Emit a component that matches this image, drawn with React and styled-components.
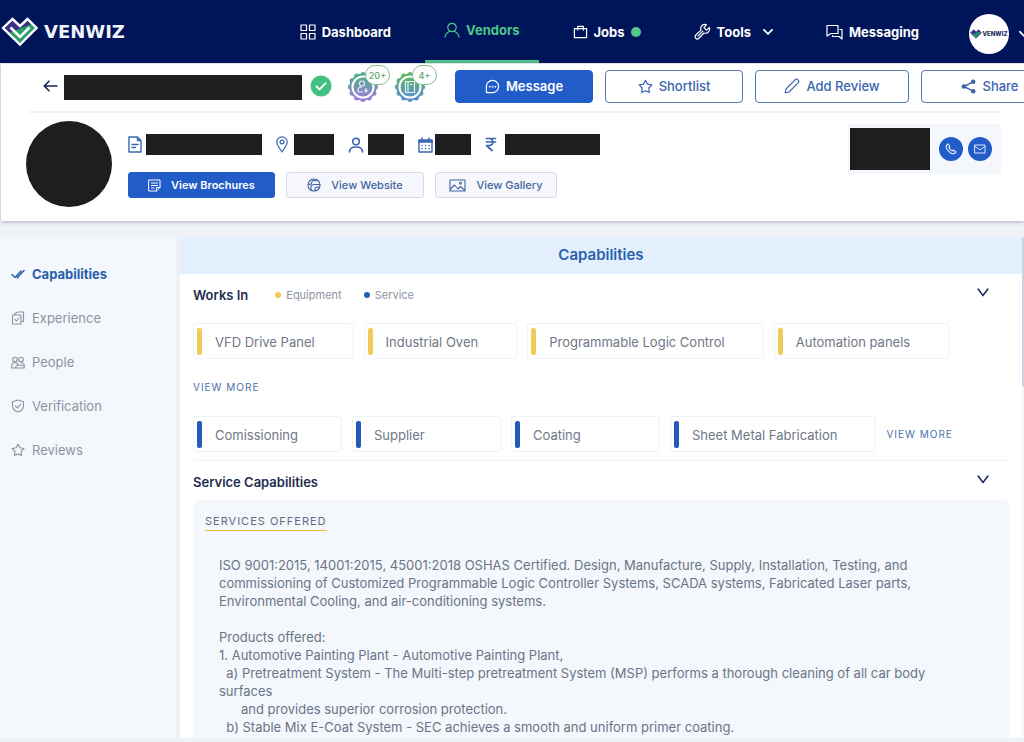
import React from "react";
import styled, { createGlobalStyle } from "styled-components";

const Global = createGlobalStyle`
  * { box-sizing: border-box; }
  body { margin: 0; background: #eef2f6; font-family: Inter, "Open Sans", sans-serif; }
  button, a { font-family: inherit; }
  h1, h2, h3, p, ul { margin: 0; padding: 0; }
`;

const Page = styled.div`
  display: flex;
  flex-direction: column;
  height: 100vh;
  overflow: hidden;
`;

const Svg = styled.svg`
  display: block;
  flex: none;
  width: ${(p) => p.$w || 16}px;
  height: ${(p) => p.$h || p.$w || 16}px;
  fill: none;
  stroke: currentColor;
  stroke-width: ${(p) => p.$stroke || 1.4};
  stroke-linecap: round;
  stroke-linejoin: ${(p) => p.$join || "round"};
`;

/* ---------- icons ---------- */
const IconGrid = () => (
  <Svg viewBox="0 0 16 16" $w={16} $stroke={1.2}>
    <path d="M1 1h5.5v5.5H1zM9.5 1H15v5.5H9.5zM1 9.5h5.5V15H1zM9.5 9.5H15V15H9.5z" />
  </Svg>
);
const IconUser = ({ size = 16, stroke = 1.2 }) => (
  <Svg viewBox="0 0 16 16" $w={size} $stroke={stroke}>
    <circle cx="8" cy="5.5" r="4.2" />
    <path d="M1 15c.6-3 2.500-4.700 4.600-5.500M15 15c-.6-3-2.500-4.700-4.600-5.500" />
  </Svg>
);
const IconPerson = () => (
  <Svg viewBox="0 0 16 16" $stroke={1.6}>
    <circle cx="8" cy="4.500" r="3.300" />
    <path d="M1.500 15c0-3.300 2.600-5 6.500-5s6.500 1.700 6.500 5" />
  </Svg>
);
const IconBag = () => (
  <Svg viewBox="0 0 16 16" $w={15} $stroke={1.3}>
    <path d="M1.500 5h13v9.500h-13zM5 5V2.500h6V5M5 5v1.500M11 5v1.500" />
  </Svg>
);
const IconWrench = () => (
  <Svg viewBox="0 0 24 24" $w={17} $stroke={1.7}>
    <path d="M21.500 6.500 17.500 10 14 6.500l3.500-4C14 1 10 3 9.500 7c-.1 1 0 2 .4 3L2.500 17a3 3 0 0 0 4.500 4.500l7-7.400c4 1.300 8-1.500 8-5.600 0-.7-.2-1.400-.5-2z" />
    <path d="m5.500 18.500 7-7" />
  </Svg>
);
const IconChats = () => (
  <Svg viewBox="0 0 17 16" $w={17} $h={16} $stroke={1.2}>
    <path d="M1 1.500h11v8H5L1 12z" />
    <path d="M14 5.500h2V15l-3-2.500H6.500v-1" />
  </Svg>
);
const IconChevron = ({ w = 10, stroke = 1.8 }) => (
  <Svg viewBox="0 0 10 6" $w={w} $h={w === 12 ? 9 : 6} $stroke={stroke} preserveAspectRatio="none">
    <path d="m1 .8 4 4.200 4-4.200" />
  </Svg>
);
const IconBack = () => (
  <Svg viewBox="0 0 15 12" $w={15} $h={12} $stroke={1.6}>
    <path d="M14 6H1.500M6 1.200 1.200 6 6 10.800" />
  </Svg>
);
const IconVerified = () => (
  <Svg viewBox="0 0 22 22" $w={22} $stroke={1.9}>
    <circle cx="11" cy="11" r="10.500" fill="#42c080" stroke="none" />
    <path d="m6.500 11.300 3 3 6-6" stroke="#fff" />
  </Svg>
);
const IconMessage = () => (
  <Svg viewBox="0 0 16 16" $w={15} $stroke={1.3}>
    <path d="M1.500 14.500V8A6.500 6.500 0 1 1 8 14.500z" />
    <path d="M5 8.200h.1M8 8.200h.1M11 8.200h.1" strokeWidth="1.800" />
  </Svg>
);
const IconStar = ({ size = 15, stroke = 1.3 }) => (
  <Svg viewBox="0 0 16 16" $w={size} $stroke={stroke}>
    <path d="m8 1.300 2.100 4.100 4.700.9-3.300 3.300.6 4.800L8 12.500l-4.100 1.900.6-4.800L1.200 6.300l4.700-.9z" />
  </Svg>
);
const IconPencil = () => (
  <Svg viewBox="0 0 16 16" $w={16} $stroke={1.2}>
    <path d="M1.200 14.800 2 11 11.300 1.700c1.600-1.500 4.500 1 3 2.900L5 14z" />
  </Svg>
);
const IconShare = () => (
  <Svg viewBox="0 0 16 16" $w={15} $stroke={1.500}>
    <path d="M13 3 3 8l10 5" />
    <g fill="currentColor" stroke="none">
      <circle cx="13" cy="3" r="2.400" />
      <circle cx="3" cy="8" r="2.400" />
      <circle cx="13" cy="13" r="2.400" />
    </g>
  </Svg>
);
const IconDoc = () => (
  <Svg viewBox="0 0 14 17" $w={14} $h={17} $stroke={1.400}>
    <path d="M1 1h8.500L13 4.500V16H1zM9.500 1v3.500H13M4 8.500h6M4 11.500h3.500" />
  </Svg>
);
const IconPin = () => (
  <Svg viewBox="0 0 12 17" $w={12} $h={17} $stroke={1.200}>
    <path d="M6 16C3.500 12 .8 9 .8 6a5.200 5.200 0 0 1 10.400 0C11.200 9 8.500 12 6 16z" />
    <circle cx="6" cy="6" r="1.900" />
  </Svg>
);
const IconCalendar = () => (
  <Svg viewBox="0 0 15 16" $w={15} $h={16} $stroke={1.400}>
    <path d="M1 3h13v12H1zM4 1v2M11 1v2" />
    <path d="M1 4.500h13" strokeWidth="2.600" />
    <path d="M4 8.500h.1M7.500 8.500h.1M11 8.500h.1M4 11.500h.1M7.500 11.500h.1M11 11.500h.1" strokeWidth="1.500" />
  </Svg>
);
const IconRupee = () => (
  <Svg viewBox="0 0 12 15" $w={12} $h={15} $stroke={1.700}>
    <path d="M1.500 1.500h9M1.500 5h9M1.500 1.500H4c5 0 5 7 0 7H1.500l5.500 5" />
  </Svg>
);
const IconNote = () => (
  <Svg viewBox="0 0 13 13" $w={13} $stroke={1}>
    <path d="M1 1h11v7.500L8.500 12H1zM8.500 12V8.500H12M3.500 4h6M3.500 6.500h6M3.500 9H6" />
  </Svg>
);
const IconGlobe = () => (
  <Svg viewBox="0 0 14 14" $w={14} $stroke={1.100}>
    <circle cx="7" cy="7" r="6" />
    <path d="M1.300 6c1.500.6 2.700.4 3.200-.8s.1-2.200 1.500-2.700S9 3.500 10.500 2.500M4 12.300V9c0-2 1.500-2.500 3.500-2.500H13M8 12.800V10.500c0-1.300 1.500-1.700 4-1.200" />
  </Svg>
);
const IconImage = () => (
  <Svg viewBox="0 0 17 13" $w={17} $h={13} $stroke={1.100}>
    <path d="M1 1h15v11H1zM1 10.500l4.500-4.500 3.500 4 2.500-2.500 4.500 4" />
    <circle cx="11.500" cy="4.300" r=".9" />
  </Svg>
);
const IconPhone = () => (
  <Svg viewBox="0 0 12 12" $w={12} $stroke={1.200}>
    <path d="M1.500 2.500 3 1l2 2.500-1 1.200C4.700 6.300 5.700 7.300 7.300 8l1.200-1L11 9l-1.500 1.500C6 12 0 6 1.500 2.500z" />
  </Svg>
);
const IconMail = () => (
  <Svg viewBox="0 0 12 10" $w={12} $h={10} $stroke={1}>
    <path d="M1 1h10v8H1zM1.200 2.500 6 6l4.800-3.500" />
  </Svg>
);
const IconChecks = () => (
  <Svg viewBox="0 0 14 10" $w={14} $h={10} $stroke={1.500}>
    <path d="m1 5.500 3 3L10 2M6.500 8.500 13 1.500M7 8.800 6 8" />
  </Svg>
);
const IconCopyCheck = () => (
  <Svg viewBox="0 0 14 14" $w={14} $stroke={1.100}>
    <path d="M1.500 4h8.500v9H1.500zM4 4V2.500L7 1h5.500v9.500H10M4 8.500l1.500 1.500L8 7" />
  </Svg>
);
const IconPeople = () => (
  <Svg viewBox="0 0 14 13" $w={14} $h={13} $stroke={1.100}>
    <circle cx="4" cy="3.500" r="2.300" />
    <circle cx="10" cy="3.500" r="2.300" />
    <path d="M.7 12V9.500C.7 7.500 2 6.800 4 6.800s3 .7 3 2.700M4.500 12c0-2 1.500-3 4.500-3s4.300 1 4.300 3zM10 6.800c2 0 3.300 1 3.300 3V12M.7 12h4" />
  </Svg>
);
const IconShield = () => (
  <Svg viewBox="0 0 14 14" $w={14} $stroke={1.100}>
    <path d="M7 1 12.500 2.800V7c0 3-2.500 5-5.500 6C4 12 1.500 10 1.500 7V2.800zM4.300 6.800l2 2 3.700-4" />
  </Svg>
);

const LogoMark = ({ width = 37, height = 30, outline = "#fff" }) => (
  <Svg viewBox="0 0 37 30" $w={width} $h={height} $stroke={2.400} $join="miter">
    <path d="M2 11 11.500 2l7.500 7 7.500-7L35.500 11 19 27.500z" fill="#3b2f86" stroke="none" />
    <path d="m8 16 11 11.500L35 11 30.500 7z" fill="#2a9f68" stroke="none" />
    <path d="m9.500 10.500 9.500 9.500 9.500-9.500" stroke={outline} strokeWidth="2.600" strokeLinecap="butt" />
    <path d="M2 11 11.500 2l7.500 7 7.500-7L35.500 11 19 27.500z" stroke={outline} />
  </Svg>
);

/* ---------- top navigation ---------- */
const TopBar = styled.header`
  display: flex;
  flex: none;
  align-items: stretch;
  height: 63px;
  padding-left: 1px;
  background: #001459;
  color: #fff;
  overflow: hidden;
`;
const Brand = styled.a`
  display: flex;
  flex: none;
  align-items: center;
  gap: 6px;
  color: #f2f4fb;
  text-decoration: none;
`;
const BrandName = styled.span`
  font: 700 18px/24px "DejaVu Sans", sans-serif;
`;
const Nav = styled.nav`
  display: flex;
  flex: none;
  gap: 15px;
  margin-left: auto;
`;
const NavLink = styled.a`
  display: flex;
  align-items: center;
  gap: 6px;
  padding: ${(p) => (p.$active ? 0 : 3)}px 19px 0;
  border-bottom: 3px solid ${(p) => (p.$active ? "#4fbf8b" : "transparent")};
  color: ${(p) => (p.$active ? "#4cc78a" : "#fff")};
  font-size: 13px;
  font-weight: 700;
  text-decoration: none;
  white-space: nowrap;
`;
const Dot = styled.span`
  flex: none;
  width: ${(p) => p.$size}px;
  height: ${(p) => p.$size}px;
  border-radius: 50%;
  background: ${(p) => p.$color};
`;
const NavCaret = styled.span`
  margin-left: 6px;
`;
const Account = styled.button`
  display: flex;
  flex: none;
  align-items: center;
  gap: 10px;
  width: 55px;
  margin-left: 31px;
  padding: 4px 0 0;
  border: 0;
  background: none;
  color: #fff;
`;
const AccountPicture = styled.span`
  display: flex;
  flex: none;
  align-items: center;
  justify-content: center;
  width: 40px;
  height: 40px;
  border-radius: 50%;
  background: #fff;
  color: #1c2a63;
  font-size: 6px;
  font-weight: 800;
`;

/* ---------- vendor header ---------- */
const VendorCard = styled.section`
  flex: none;
  margin: 1px 0 0 1px;
  padding: 0 0 14px 27px;
  background: #fff;
  box-shadow: 0 1px 4px rgba(40, 50, 90, 0.35);
  overflow: hidden;
`;
const TitleRow = styled.div`
  display: flex;
  align-items: center;
  height: 49px;
  padding: 0 0 3px 15px;
  border-bottom: 2px solid #f2f2f4;
  margin-right: 23px;
`;
const IconButton = styled.button`
  display: flex;
  flex: none;
  padding: 0;
  border: 0;
  background: none;
  color: #17235c;
`;
const Redacted = styled.span`
  display: block;
  flex: none;
  width: ${(p) => p.$w}px;
  height: ${(p) => p.$h}px;
  background: #1e1e1e;
`;
const TitleName = styled.h1`
  flex: none;
  margin: 3px 8px 0 6px;
`;
const Badges = styled.div`
  display: flex;
  flex: none;
  gap: 3px;
  margin: 0 17px 6px 15px;
`;
const BadgeSvg = styled.svg`
  display: block;
  width: 44px;
  height: 40px;
`;
const Actions = styled.div`
  display: flex;
  flex: none;
  gap: 12px;
`;
const ActionButton = styled.button`
  display: flex;
  flex: none;
  align-items: center;
  justify-content: center;
  gap: 6px;
  width: ${(p) => (p.$wide ? 154 : 138)}px;
  height: 33px;
  padding: 0;
  border: 1px solid ${(p) => (p.$primary ? "#215cc9" : "#5478a8")};
  border-radius: 4px;
  background: ${(p) => (p.$primary ? "#215cc9" : "#fff")};
  color: ${(p) => (p.$primary ? "#fff" : "#3865ae")};
  font-size: 13px;
  font-weight: ${(p) => (p.$primary ? 600 : 500)};
`;
const Profile = styled.div`
  display: flex;
  align-items: flex-start;
  margin-right: 23px;
`;
const VendorPicture = styled.div`
  flex: none;
  width: 86px;
  height: 86px;
  margin: 8px 16px 0 -2px;
  border-radius: 50%;
  background: #1e1e1e;
`;
const ProfileBody = styled.div`
  flex: 1;
  padding-top: 21px;
`;
const Facts = styled.div`
  display: flex;
  gap: 14px;
`;
const Fact = styled.div`
  display: flex;
  align-items: center;
  gap: ${(p) => p.$gap}px;
  color: #3765b2;
`;
const Links = styled.div`
  display: flex;
  gap: 11px;
  margin-top: 17px;
`;
const LinkButton = styled.button`
  display: flex;
  align-items: center;
  justify-content: center;
  gap: 10px;
  width: ${(p) => p.$w}px;
  height: 26px;
  padding: 0;
  border: 1px solid ${(p) => (p.$primary ? "#215cc9" : "#d5dbe8")};
  border-radius: 3px;
  background: ${(p) => (p.$primary ? "#215cc9" : "#f5f7fd")};
  color: ${(p) => (p.$primary ? "#fff" : "#41659f")};
  font-size: 11px;
  font-weight: ${(p) => (p.$primary ? 600 : 500)};
`;
const Contact = styled.div`
  display: flex;
  align-items: center;
  gap: 5px;
  height: 50px;
  margin-top: 11px;
  padding: 0 9px 0 2px;
  background: #f4f7fc;
`;
const ContactName = styled.div`
  margin-right: 4px;
`;
const RoundButton = styled.button`
  display: flex;
  align-items: center;
  justify-content: center;
  width: 24px;
  height: 24px;
  padding: 0;
  border: 0;
  border-radius: 50%;
  background: #215cc9;
  color: #dfe9fb;
`;

/* ---------- body ---------- */
const Body = styled.div`
  display: flex;
  flex: 1;
  min-height: 0;
  margin: 16px 0 4px;
`;
const Sidebar = styled.nav`
  flex: none;
  width: 176px;
  margin-right: 4px;
  padding: 15px 0 0 11px;
  background: #f4f8fc;
`;
const SideLink = styled.a`
  display: flex;
  align-items: center;
  gap: 7px;
  height: 44px;
  color: ${(p) => (p.$active ? "#2a60ab" : "#8b93a3")};
  font-size: 13px;
  font-weight: ${(p) => (p.$active ? 700 : 400)};
  text-decoration: none;
`;
const Panel = styled.main`
  flex: 1;
  min-width: 0;
  background: #fff;
  overflow: hidden;
`;
const PanelTitle = styled.h2`
  height: 37px;
  background: #e3effd;
  color: #2a61ab;
  font-size: 15px;
  font-weight: 600;
  line-height: 36px;
  text-align: center;
`;
const Track = styled.div`
  flex: none;
  width: 2px;
  background: #f4f6fa;
`;
const Thumb = styled.div`
  height: 150px;
  border-radius: 1px;
  background: #cdd3e2;
`;
const Section = styled.section`
  margin: 0 13px;
`;
const SectionHead = styled.div`
  display: flex;
  align-items: center;
  padding: ${(p) => (p.$first ? "10px 20px 17px 0" : "10px 20px 7px 0")};
  line-height: 22px;
`;
const SectionTitle = styled.h3`
  color: #1e2b50;
  font-size: 13px;
  font-weight: 600;
`;
const Legend = styled.span`
  display: flex;
  align-items: center;
  gap: 5px;
  margin-left: ${(p) => p.$ml}px;
  color: #8f95a3;
  font-size: 11px;
`;
const Toggle = styled.span`
  margin: 0 0 5px auto;
`;
const Chips = styled.div`
  display: flex;
  align-items: center;
  gap: 10px;
`;
const Chip = styled.div`
  display: flex;
  flex: none;
  align-items: center;
  min-width: 149px;
  height: 36px;
  padding: 1px 38px 0 4px;
  border: 1px solid #f1f2f5;
  border-radius: 3px;
  color: #6f7786;
  font-size: 13px;
  white-space: nowrap;
  &::before {
    content: "";
    width: 5px;
    height: 27px;
    margin: 0 13px 1px -1px;
    border-radius: 2px;
    background: ${(p) => p.$color};
  }
`;
const MoreButton = styled.button`
  flex: none;
  padding: 0;
  border: 0;
  background: none;
  color: #4a72a8;
  font-size: 10px;
  line-height: 16px;
  letter-spacing: 1px;
`;
const MoreRow = styled.div`
  display: flex;
  padding: 20px 0 21px;
`;
const Divider = styled.hr`
  height: 1px;
  margin: 8px 0 0;
  border: 0;
  background: #f3f3f6;
`;
const Offered = styled.div`
  padding: 12px;
  border-radius: 5px;
  background: #f4f7fc;
`;
const OfferedTitle = styled.h4`
  width: fit-content;
  margin: 0;
  border-bottom: 1px solid #eebb3c;
  color: #5f6b80;
  font-size: 11px;
  font-weight: 400;
  line-height: 18px;
  letter-spacing: 1px;
`;
const OfferedText = styled.p`
  && { padding: 25px 30px 0 14px; }
  color: #697587;
  font-size: 13px;
  line-height: 18px;
  white-space: pre-wrap;
`;

const YELLOW = "#f2cb57";
const BLUE = "#215cba";

const TEXT = `ISO 9001:2015, 14001:2015, 45001:2018 OSHAS Certified. Design, Manufacture, Supply, Installation, Testing, and
commissioning of Customized Programmable Logic Controller Systems, SCADA systems, Fabricated Laser parts,
Environmental Cooling, and air-conditioning systems.

Products offered:
1. Automotive Painting Plant - Automotive Painting Plant,
  a) Pretreatment System - The Multi-step pretreatment System (MSP) performs a thorough cleaning of all car body surfaces
      and provides superior corrosion protection.
  b) Stable Mix E-Coat System - SEC achieves a smooth and uniform primer coating.`;

const gear = Array.from({ length: 12 }, (_, i) => {
  const a = (i * Math.PI) / 6;
  return [16 + 12.6 * Math.cos(a), 24 + 12.6 * Math.sin(a)];
});

const Badge = ({ id, from, to, count, children }) => (
  <BadgeSvg viewBox="0 0 44 40" role="img" aria-label={count}>
    <defs>
      <linearGradient id={id} x1="0" y1="8" x2="0" y2="40" gradientUnits="userSpaceOnUse">
        <stop offset="0.15" stopColor={from} />
        <stop offset="0.85" stopColor={to} />
      </linearGradient>
    </defs>
    <g fill={`url(#${id})`}>
      <circle cx="16" cy="24" r="13.600" />
      {gear.map(([x, y], i) => (
        <circle key={i} cx={x} cy={y} r="2.500" />
      ))}
    </g>
    <circle cx="16" cy="24" r="10.500" fill="none" stroke="#fff" strokeWidth="2" />
    <g fill="none" stroke="#e8f1fb" strokeWidth="1.200">{children}</g>
    <rect x="18.500" y="2.500" width="24" height="19" rx="9.500" fill="#fff" stroke="#7fc08f" />
    <text x="30.500" y="15.500" textAnchor="middle" fontSize="9" fontWeight="500" fill="#5ba56c">{count}</text>
  </BadgeSvg>
);

export default function App() {
  return (
    <Page>
      <Global />
      <TopBar>
        <Brand href="#">
          <LogoMark />
          <BrandName>VENWIZ</BrandName>
        </Brand>
        <Nav>
          <NavLink href="#"><IconGrid />Dashboard</NavLink>
          <NavLink href="#" $active><IconUser />Vendors</NavLink>
          <NavLink href="#"><IconBag />Jobs<Dot $size={10} $color="#4fc98d" /></NavLink>
          <NavLink href="#"><IconWrench />Tools<NavCaret><IconChevron /></NavCaret></NavLink>
          <NavLink href="#"><IconChats />Messaging</NavLink>
        </Nav>
        <Account aria-label="Account">
          <AccountPicture><LogoMark width={12} height={10} outline="#2b4a86" />VENWIZ</AccountPicture>
          <IconChevron />
        </Account>
      </TopBar>

      <VendorCard>
        <TitleRow>
          <IconButton aria-label="Back"><IconBack /></IconButton>
          <TitleName><Redacted $w={238} $h={25} /></TitleName>
          <IconVerified />
          <Badges>
            <Badge id="people" from="#4fae8b" to="#9a7fd6" count="20+">
              <circle cx="15" cy="20.500" r="2.500" />
              <path d="M11 29v-2c0-2 2-3 4-3M11 29h5M19 25v4M17.500 27l1.500 2 1.500-2" />
            </Badge>
            <Badge id="projects" from="#5fb562" to="#5a8fd0" count="4+">
              <path d="M11.500 18.500h9v11h-9zM14 18.500v11M16 21.500h2.500" />
            </Badge>
          </Badges>
          <Actions>
            <ActionButton $primary><IconMessage />Message</ActionButton>
            <ActionButton><IconStar />Shortlist</ActionButton>
            <ActionButton $wide><IconPencil />Add Review</ActionButton>
            <ActionButton><IconShare />Share</ActionButton>
          </Actions>
        </TitleRow>
        <Profile>
          <VendorPicture />
          <ProfileBody>
            <Facts>
              <Fact $gap={4}><IconDoc /><Redacted $w={116} $h={21} /></Fact>
              <Fact $gap={6}><IconPin /><Redacted $w={40} $h={21} /></Fact>
              <Fact $gap={4}><IconPerson /><Redacted $w={36} $h={21} /></Fact>
              <Fact $gap={2}><IconCalendar /><Redacted $w={36} $h={21} /></Fact>
              <Fact $gap={8}><IconRupee /><Redacted $w={95} $h={21} /></Fact>
            </Facts>
            <Links>
              <LinkButton $primary $w={147}><IconNote />View Brochures</LinkButton>
              <LinkButton $w={138}><IconGlobe />View Website</LinkButton>
              <LinkButton $w={122}><IconImage />View Gallery</LinkButton>
            </Links>
          </ProfileBody>
          <Contact>
            <ContactName><Redacted $w={80} $h={42} /></ContactName>
            <RoundButton aria-label="Call"><IconPhone /></RoundButton>
            <RoundButton aria-label="Email"><IconMail /></RoundButton>
          </Contact>
        </Profile>
      </VendorCard>

      <Body>
        <Sidebar>
          <SideLink href="#" $active><IconChecks />Capabilities</SideLink>
          <SideLink href="#"><IconCopyCheck />Experience</SideLink>
          <SideLink href="#"><IconPeople />People</SideLink>
          <SideLink href="#"><IconShield />Verification</SideLink>
          <SideLink href="#"><IconStar size={14} />Reviews</SideLink>
        </Sidebar>
        <Panel>
          <PanelTitle>Capabilities</PanelTitle>
          <Section>
            <SectionHead $first>
              <SectionTitle>Works In</SectionTitle>
              <Legend $ml={27}><Dot $size={6} $color={YELLOW} />Equipment</Legend>
              <Legend $ml={22}><Dot $size={6} $color={BLUE} />Service</Legend>
              <Toggle><IconButton aria-label="Collapse Works In"><IconChevron w={12} stroke={1.200} /></IconButton></Toggle>
            </SectionHead>
            <Chips>
              <Chip $color={YELLOW}>VFD Drive Panel</Chip>
              <Chip $color={YELLOW}>Industrial Oven</Chip>
              <Chip $color={YELLOW}>Programmable Logic Control</Chip>
              <Chip $color={YELLOW}>Automation panels</Chip>
            </Chips>
            <MoreRow><MoreButton>VIEW MORE</MoreButton></MoreRow>
            <Chips>
              <Chip $color={BLUE}>Comissioning</Chip>
              <Chip $color={BLUE}>Supplier</Chip>
              <Chip $color={BLUE}>Coating</Chip>
              <Chip $color={BLUE}>Sheet Metal Fabrication</Chip>
              <MoreButton>VIEW MORE</MoreButton>
            </Chips>
            <Divider />
          </Section>
          <Section>
            <SectionHead>
              <SectionTitle>Service Capabilities</SectionTitle>
              <Toggle><IconButton aria-label="Collapse Service Capabilities"><IconChevron w={12} stroke={1.200} /></IconButton></Toggle>
            </SectionHead>
            <Offered>
              <OfferedTitle>SERVICES OFFERED</OfferedTitle>
              <OfferedText>{TEXT}</OfferedText>
            </Offered>
          </Section>
        </Panel>
        <Track><Thumb /></Track>
      </Body>
    </Page>
  );
}
